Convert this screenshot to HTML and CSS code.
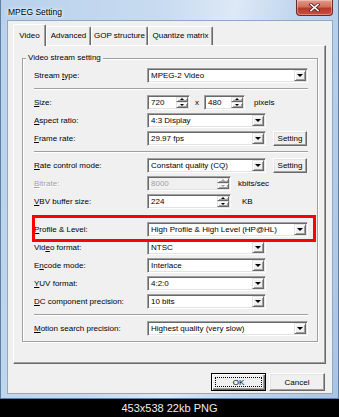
FILE: index.html
```html
<!DOCTYPE html>
<html lang="en">
<head>
    <meta charset="UTF-8">
    <meta name="viewport" content="width=device-width, initial-scale=1.0">
    <title>MPEG Setting</title>
    <link rel="stylesheet" href="styles.css">
</head>
<body>

<div class="window">
    <div class="titlebar">
        <span class="title">MPEG Setting</span>
        <div class="close">
            <svg width="11" height="9" viewBox="0 0 11 9">
                <path d="M2 1.5 L9 7.5 M9 1.5 L2 7.5" stroke="#5a2020" stroke-width="3.2" stroke-linecap="square"/>
                <path d="M2 1.5 L9 7.5 M9 1.5 L2 7.5" stroke="#fff" stroke-width="1.6" stroke-linecap="square"/>
            </svg>
        </div>
    </div>

    <div class="client">
        <div class="tabs">
            <div class="tab active" style="width: 33px">Video</div>
            <div class="tab" style="width: 45px">Advanced</div>
            <div class="tab" style="width: 57px">GOP structure</div>
            <div class="tab" style="width: 65px">Quantize matrix</div>
        </div>

        <div class="panel">
            <fieldset class="group">
                <legend>Video stream setting</legend>

                <div class="row">
                    <label class="lbl">Stream <u>t</u>ype:</label>
                    <div class="combo wide"><span class="val">MPEG-2 Video</span><span class="drop"></span></div>
                </div>
                <div class="sep"></div>

                <div class="row">
                    <label class="lbl"><u>S</u>ize:</label>
                    <div class="spin" style="width: 43px"><span class="val">720</span><span class="updown"><span class="up"></span><span class="down"></span></span></div>
                    <span class="times">x</span>
                    <div class="spin" style="width: 41px"><span class="val">480</span><span class="updown"><span class="up"></span><span class="down"></span></span></div>
                    <span class="unit pixels">pixels</span>
                </div>
                <div class="row">
                    <label class="lbl"><u>A</u>spect ratio:</label>
                    <div class="combo"><span class="val">4:3 Display</span><span class="drop"></span></div>
                </div>
                <div class="row">
                    <label class="lbl"><u>F</u>rame rate:</label>
                    <div class="combo"><span class="val">29.97 fps</span><span class="drop"></span></div>
                    <button class="btn small">Setting</button>
                </div>
                <div class="sep"></div>

                <div class="row">
                    <label class="lbl"><u>R</u>ate control mode:</label>
                    <div class="combo"><span class="val">Constant quality (CQ)</span><span class="drop"></span></div>
                    <button class="btn small">Setting</button>
                </div>
                <div class="row">
                    <label class="lbl off"><u>B</u>itrate:</label>
                    <div class="spin off" style="width: 84px"><span class="val">8000</span><span class="updown"><span class="up"></span><span class="down"></span></span></div>
                    <span class="unit">kbits/sec</span>
                </div>
                <div class="row">
                    <label class="lbl"><u>V</u>BV buffer size:</label>
                    <div class="spin" style="width: 84px"><span class="val">224</span><span class="updown"><span class="up"></span><span class="down"></span></span></div>
                    <span class="unit kb">KB</span>
                </div>

                <div class="row marked">
                    <label class="lbl"><u>P</u>rofile &amp; Level:</label>
                    <div class="combo wide"><span class="val">High Profile &amp; High Level (HP@HL)</span><span class="drop"></span></div>
                    <div class="highlight"></div>
                </div>
                <div class="row">
                    <label class="lbl">Vid<u>e</u>o format:</label>
                    <div class="combo"><span class="val">NTSC</span><span class="drop"></span></div>
                </div>
                <div class="row">
                    <label class="lbl">E<u>n</u>code mode:</label>
                    <div class="combo"><span class="val">Interlace</span><span class="drop"></span></div>
                </div>
                <div class="row">
                    <label class="lbl"><u>Y</u>UV format:</label>
                    <div class="combo"><span class="val">4:2:0</span><span class="drop"></span></div>
                </div>
                <div class="row">
                    <label class="lbl"><u>D</u>C component precision:</label>
                    <div class="combo"><span class="val">10 bits</span><span class="drop"></span></div>
                </div>
                <div class="sep"></div>

                <div class="row">
                    <label class="lbl"><u>M</u>otion search precision:</label>
                    <div class="combo wide"><span class="val">Highest quality (very slow)</span><span class="drop"></span></div>
                </div>
            </fieldset>
        </div>

        <div class="actions">
            <button class="btn default" style="width: 55px">OK</button>
            <button class="btn" style="width: 56px">Cancel</button>
        </div>
    </div>
</div>

<div class="caption">453x538 22kb PNG</div>

</body>
</html>
```

FILE: styles.css
```css
* {
    box-sizing: border-box;
}
body {
    margin: 0;
    width: 339px;
    background-color: #000;
    font-family: "Liberation Sans", Arial, sans-serif;
    font-size: 8px;
    color: #000;
}

/* Aero window frame */
.window {
    width: 339px;
    height: 399px;
    border: 1px solid #5f7fa5;
    border-top: none;
    padding: 0 5px 4px 6px;
    background: linear-gradient(100deg, #b9d1ec 0%, #c8dbf0 40%, #dde9f6 58%, #c2d7ee 72%, #a9c4e4 100%);
    display: flex;
    flex-direction: column;
}
.titlebar {
    height: 20px;
    display: flex;
    justify-content: space-between;
    align-items: flex-start;
}
.title {
    margin: 7px 0 0 1px;
    font-size: 8.5px;
    line-height: 10px;
    text-shadow: 0 0 5px #fff, 0 0 3px #fff;
}
.close {
    width: 37px;
    height: 16px;
    border: 1px solid #6b2a2a;
    border-top: none;
    border-radius: 0 0 4px 4px;
    background: linear-gradient(#e39a8a 0%, #d0705e 45%, #b8392a 55%, #c9503c 100%);
    box-shadow: inset 0 0 0 1px rgba(255, 255, 255, 0.35);
    display: flex;
    align-items: center;
    justify-content: center;
}
.close svg {
    display: block;
}

.client {
    flex: 1;
    background-color: #f0f0f0;
    border: 1px solid #8ea8c8;
    padding: 3px 6px 0 5px;
}

/* tabs */
.tabs {
    height: 21px;
    display: flex;
    align-items: flex-end;
}
.tab {
    height: 19px;
    line-height: 17px;
    text-align: center;
    white-space: nowrap;
    border-top: 1px solid #fff;
    border-left: 1px solid #fff;
    border-right: 1px solid #696969;
    border-radius: 2px 2px 0 0;
    box-shadow: inset -1px 0 #a0a0a0;
}
.tab.active {
    height: 22px;
    line-height: 21px;
    margin-bottom: -1px;
    background-color: #f0f0f0;
    position: relative;
    z-index: 1;
}

.panel {
    height: 319px;
    border: 1px solid;
    border-color: #fff #696969 #696969 #fff;
    box-shadow: inset -1px -1px #a0a0a0;
    display: flex;
    flex-direction: column;
}

/* group box */
.group {
    margin: 7px 7px 0 8px;
    padding: 3px 9px 4px 11px;
    border: 1px solid #a0a0a0;
    box-shadow: inset 1px 1px #fff, 1px 1px #fff;
    min-width: 0;
}
.group legend {
    margin-left: -8px;
    padding: 0 2px;
    line-height: 10px;
    background-color: #f0f0f0;
}

.row {
    height: 18px;
    display: flex;
    align-items: center;
}
.lbl {
    width: 113px;
    flex-shrink: 0;
    white-space: nowrap;
}
.off {
    color: #a0a0a0;
}
.lbl.off {
    text-shadow: 1px 1px #fff;
}
.sep {
    margin: 4px 0 3px;
    border-top: 1px solid #a0a0a0;
    border-bottom: 1px solid #fff;
}
.marked {
    margin-top: 10px;
    position: relative;
}
.highlight {
    position: absolute;
    top: -5px;
    bottom: -4px;
    left: -2px;
    right: -8px;
    border: 3px solid #f00;
}

/* sunken fields */
.combo, .spin {
    height: 15px;
    background-color: #fff;
    border: 1px solid;
    border-color: #a0a0a0 #fff #fff #a0a0a0;
    box-shadow: inset 1px 1px #696969, inset -1px -1px #e3e3e3;
    padding: 1px;
    display: flex;
}
.combo {
    width: 119px;
}
.combo.wide {
    flex: 1;
}
.spin.off {
    background-color: #f0f0f0;
}
.val {
    flex: 1;
    padding-left: 2px;
    line-height: 11px;
    white-space: nowrap;
    overflow: hidden;
}
.drop, .up, .down {
    background-color: #f0f0f0;
    border: 1px solid;
    border-color: #e3e3e3 #696969 #696969 #e3e3e3;
    box-shadow: inset 1px 1px #fff, inset -1px -1px #a0a0a0;
    display: flex;
    align-items: center;
    justify-content: center;
}
.drop {
    width: 12px;
}
.drop::after {
    content: "";
    border-left: 3px solid transparent;
    border-right: 3px solid transparent;
    border-top: 3px solid #000;
}
.updown {
    width: 12px;
    display: flex;
    flex-direction: column;
}
.up, .down {
    flex: 1;
}
.up::after, .down::after {
    content: "";
    border-left: 2px solid transparent;
    border-right: 2px solid transparent;
}
.up::after {
    border-bottom: 2px solid #000;
}
.down::after {
    border-top: 2px solid #000;
}
.spin.off .up::after {
    border-bottom-color: #a0a0a0;
}
.spin.off .down::after {
    border-top-color: #a0a0a0;
}
.times {
    width: 14px;
    text-align: center;
}
.unit {
    margin-left: 7px;
}
.unit.pixels {
    margin-left: 9px;
}
.unit.kb {
    margin-left: 11px;
}

/* push buttons */
.btn {
    height: 18px;
    padding: 0;
    font: inherit;
    color: #000;
    background-color: #f0f0f0;
    border: 1px solid;
    border-color: #fff #696969 #696969 #fff;
    box-shadow: inset -1px -1px #a0a0a0, inset 1px 1px #e3e3e3;
}
.btn.small {
    width: 34px;
    height: 15px;
    margin-left: 7px;
}
.btn.default {
    border: 1px solid #000;
    box-shadow: inset 1px 1px #fff, inset -1px -1px #696969, inset -2px -2px #a0a0a0;
    outline: 1px dotted #000;
    outline-offset: -5px;
}
.actions {
    margin-top: 9px;
    padding-right: 1px;
    display: flex;
    justify-content: flex-end;
    gap: 3px;
}

.caption {
    height: 18px;
    line-height: 19px;
    text-align: center;
    color: #eee;
    font-size: 11px;
}
```
